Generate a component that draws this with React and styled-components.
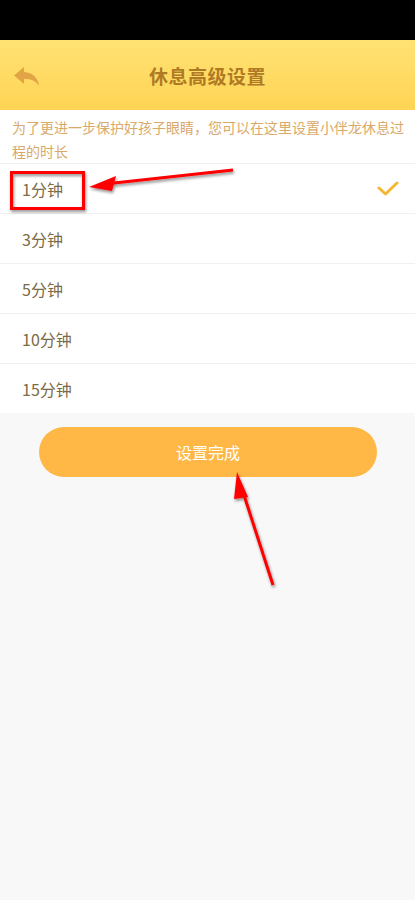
import styled, { createGlobalStyle } from "styled-components";

const GlobalStyle = createGlobalStyle`
  body {
    margin: 0;
    background: #f8f8f8;
    font-family: "Noto Sans CJK SC", "Noto Sans", sans-serif;
  }
`;

const options = ["1分钟", "3分钟", "5分钟", "10分钟", "15分钟"];

function BackIcon() {
  return (
    <svg width="26" height="20" viewBox="0 0 26 20">
      <path
        d="M10 0 L0 8.5 L10 17 L10 12 C17 11.5 22 14 25 19 C24 11 19 5.5 10 5 Z"
        fill="#e3a446"
      />
    </svg>
  );
}

function Check() {
  return (
    <svg width="22" height="16" viewBox="0 0 22 16">
      <path
        d="M2 7 L8.5 13 L20 2"
        fill="none"
        stroke="#f5b731"
        strokeWidth="3"
        strokeLinecap="round"
        strokeLinejoin="round"
      />
    </svg>
  );
}

function Annotations() {
  return (
    <Overlay width="415" height="900" viewBox="0 0 415 900">
      <defs>
        <filter id="sh" x="-20%" y="-20%" width="140%" height="140%">
          <feDropShadow dx="1" dy="2" stdDeviation="1.5" floodColor="#000" floodOpacity="0.45" />
        </filter>
      </defs>
      <g filter="url(#sh)">
        <rect x="11.5" y="172.5" width="72" height="36" fill="none" stroke="#f00" strokeWidth="3" />
        <line x1="233" y1="170" x2="105" y2="184" stroke="#f00" strokeWidth="3" />
        <polygon points="89,187 116,176 112,191" fill="#f00" />
        <line x1="273" y1="585" x2="243" y2="492" stroke="#f00" strokeWidth="3" />
        <polygon points="237,472 248,497 234,499" fill="#f00" />
      </g>
    </Overlay>
  );
}

export default function App() {
  return (
    <Page>
      <GlobalStyle />
      <StatusBar />
      <Header>
        <BackButton>
          <BackIcon />
        </BackButton>
        <Title>休息高级设置</Title>
      </Header>
      <Intro>为了更进一步保护好孩子眼睛，您可以在这里设置小伴龙休息过程的时长</Intro>
      <List>
        {options.map((o, i) => (
          <Item key={o}>
            <ItemText>{o}</ItemText>
            {i === 0 && <Check />}
          </Item>
        ))}
      </List>
      <ButtonWrap>
        <DoneButton>设置完成</DoneButton>
      </ButtonWrap>
      <Annotations />
    </Page>
  );
}

const Page = styled.div`
  position: relative;
  width: 415px;
  min-height: 900px;
  background: #f8f8f8;
  overflow: hidden;
`;

const StatusBar = styled.div`
  height: 40px;
  background: #000;
`;

const Header = styled.div`
  position: relative;
  height: 70px;
  display: flex;
  align-items: center;
  justify-content: center;
  background: linear-gradient(180deg, #ffe274 0%, #ffd454 100%);
`;

const BackButton = styled.div`
  position: absolute;
  left: 14px;
  top: 27px;
  display: flex;
`;

const Title = styled.h1`
  margin: 0;
  font-size: 19px;
  font-weight: 700;
  color: #b07a25;
  letter-spacing: 0.5px;
`;

const Intro = styled.p`
  margin: 0;
  padding: 5px 10px 0 12px;
  background: #fff;
  font-size: 14px;
  line-height: 24px;
  color: #d9a96a;
`;

const List = styled.div`
  background: #fff;
`;

const Item = styled.div`
  height: 50px;
  display: flex;
  align-items: center;
  justify-content: space-between;
  padding: 0 16px 0 22px;
  box-sizing: border-box;
  border-top: 1px solid #f1f1f1;
`;

const ItemText = styled.span`
  font-size: 16px;
  color: #7b6a45;
`;

const ButtonWrap = styled.div`
  display: flex;
  justify-content: center;
  padding-top: 14px;
`;

const DoneButton = styled.button`
  width: 338px;
  height: 50px;
  border: none;
  border-radius: 25px;
  background: #ffb746;
  color: #fff;
  font-family: "Noto Sans CJK SC", sans-serif;
  font-size: 16px;
  margin-left: 1px;
`;

const Overlay = styled.svg`
  position: absolute;
  left: 0;
  top: 0;
  pointer-events: none;
`;
